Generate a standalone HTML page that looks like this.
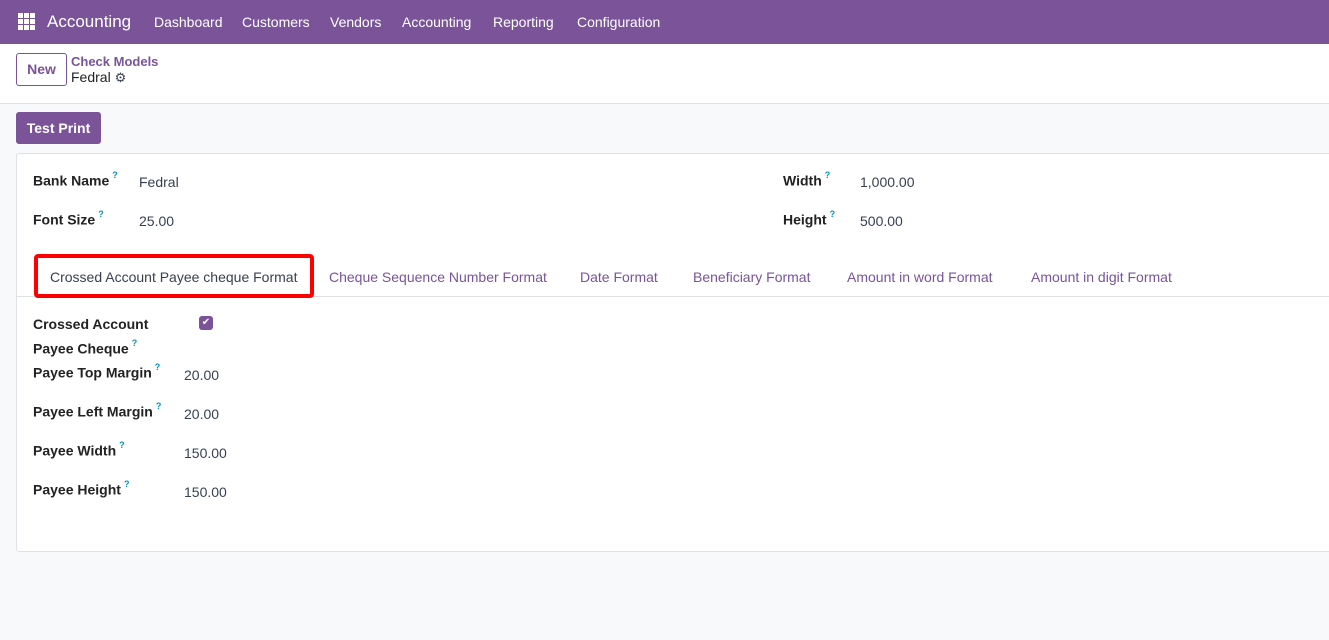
<!DOCTYPE html>
<html><head><meta charset="utf-8"><style>
*{box-sizing:border-box;margin:0;padding:0}
body{width:1329px;height:640px;overflow:hidden;background:#f8f9fa;font-family:"Liberation Sans",sans-serif;font-size:14px;color:#374151;position:relative}
.nav{position:absolute;left:0;top:0;width:1329px;height:44px;background:#7b5399;color:#fff}
.nav span{position:absolute;top:14px;font-size:14px}
.hdr{position:absolute;left:0;top:44px;width:1329px;height:60px;background:#fff;border-bottom:1px solid #dee2e6}
.abs{position:absolute;white-space:nowrap}
.lbl{font-weight:bold;color:#222}
sup{color:#0b90b5;font-size:9px;font-weight:bold;margin-left:3px;position:relative;top:-2px}
.card{position:absolute;left:16px;top:153px;width:1330px;height:399px;background:#fff;border:1px solid #dee2e6;border-radius:3px}
.tab{position:absolute;top:269px;color:#7b5399}
</style></head><body>
<div class="nav">
<svg style="position:absolute;left:18px;top:13px" width="17" height="17" viewBox="0 0 17 17" fill="#fff"><rect x="0" y="0" width="5" height="5"/><rect x="6" y="0" width="5" height="5"/><rect x="12" y="0" width="5" height="5"/><rect x="0" y="6" width="5" height="5"/><rect x="6" y="6" width="5" height="5"/><rect x="12" y="6" width="5" height="5"/><rect x="0" y="12" width="5" height="5"/><rect x="6" y="12" width="5" height="5"/><rect x="12" y="12" width="5" height="5"/></svg>
<span style="left:47px;top:12px;font-size:17px">Accounting</span>
<span style="left:154px">Dashboard</span><span style="left:242px">Customers</span><span style="left:330px">Vendors</span><span style="left:402px">Accounting</span><span style="left:493px">Reporting</span><span style="left:577px">Configuration</span>
</div>
<div class="hdr">
<div class="abs" style="left:16px;top:9px;width:51px;height:33px;border:1px solid #7b5399;border-radius:3px;color:#7b5399;font-weight:bold;text-align:center;line-height:31px">New</div>
<div class="abs" style="left:71px;top:10px;color:#7b5399;font-weight:bold;font-size:13px">Check Models</div>
<div class="abs" style="left:71px;top:25px;font-size:14px;color:#222">Fedral <span style="color:#374151;font-size:13px">⚙</span></div>
</div>
<div class="abs" style="left:16px;top:112px;width:85px;height:32px;background:#7b5399;border-radius:3px;color:#fff;font-weight:bold;text-align:center;line-height:32px">Test Print</div>
<div class="card"></div>
<div class="abs lbl" style="left:33px;top:172px">Bank Name<sup>?</sup></div>
<div class="abs" style="left:139px;top:174px">Fedral</div>
<div class="abs lbl" style="left:33px;top:211px">Font Size<sup>?</sup></div>
<div class="abs" style="left:139px;top:213px">25.00</div>
<div class="abs lbl" style="left:783px;top:172px">Width<sup>?</sup></div>
<div class="abs" style="left:860px;top:174px">1,000.00</div>
<div class="abs lbl" style="left:783px;top:211px">Height<sup>?</sup></div>
<div class="abs" style="left:860px;top:213px">500.00</div>
<div class="abs" style="left:17px;top:296px;width:1312px;border-top:1px solid #dee2e6"></div>
<div class="abs" style="left:34px;top:254px;width:280px;height:44px;border:4px solid #f00;border-radius:4px;background:#fff"></div>
<div class="abs" style="left:50px;top:269px;color:#374151">Crossed Account Payee cheque Format</div>
<div class="tab" style="left:329px">Cheque Sequence Number Format</div>
<div class="tab" style="left:580px">Date Format</div>
<div class="tab" style="left:693px">Beneficiary Format</div>
<div class="tab" style="left:847px">Amount in word Format</div>
<div class="tab" style="left:1031px">Amount in digit Format</div>
<div class="abs lbl" style="left:33px;top:314px;line-height:21px">Crossed Account<br>Payee Cheque<sup>?</sup></div>
<div class="abs" style="left:199px;top:316px;width:14px;height:14px;background:#7b5399;border-radius:3px;color:#fff;font-size:10px;text-align:center;line-height:14px">✔</div>
<div class="abs lbl" style="left:33px;top:364px">Payee Top Margin<sup>?</sup></div><div class="abs" style="left:184px;top:367px">20.00</div>
<div class="abs lbl" style="left:33px;top:403px">Payee Left Margin<sup>?</sup></div><div class="abs" style="left:184px;top:406px">20.00</div>
<div class="abs lbl" style="left:33px;top:442px">Payee Width<sup>?</sup></div><div class="abs" style="left:184px;top:445px">150.00</div>
<div class="abs lbl" style="left:33px;top:481px">Payee Height<sup>?</sup></div><div class="abs" style="left:184px;top:484px">150.00</div>
</body></html>
